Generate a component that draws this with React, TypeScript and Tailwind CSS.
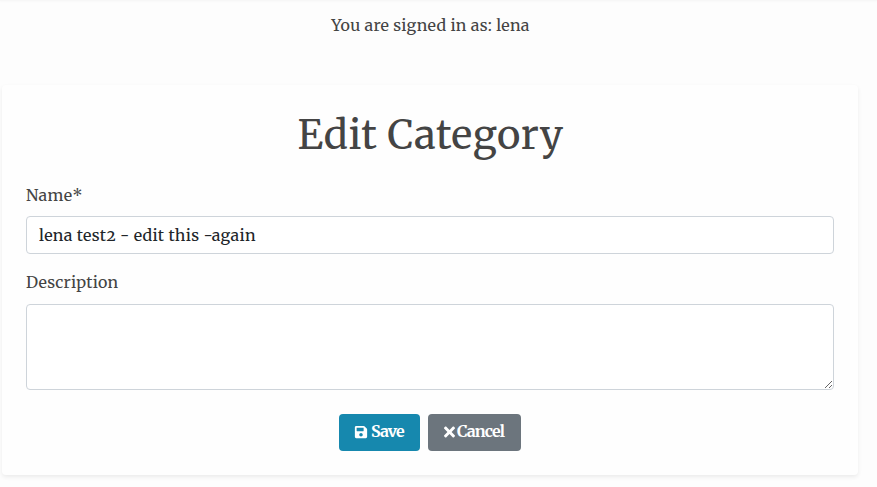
import { FaSave, FaTimes } from 'react-icons/fa';

export default function App() {
  return (
    <div className="min-h-[487px] overflow-hidden bg-[#fdfdfd] font-['Merriweather','DejaVu_Serif',serif] text-[16px] font-[385] leading-6 text-[#444] [font-feature-settings:'onum']">
      <div className="h-px bg-[#f7f7f7] shadow-[0_1px_2px_rgba(0,0,0,0.03)]" />
      <main className="ml-0.5 w-[856px]">
        <p className="pt-3 pl-px text-center tracking-[0.28px]">You are signed in as: lena</p>
        <form className="mt-12 h-[390px] rounded bg-[#fefefe] px-6 pt-6 shadow-[0_2px_4px_rgba(0,0,0,0.075)]" onSubmit={(e) => e.preventDefault()}>
          <h1 className="pt-0.5 pl-px text-center text-[40px] leading-12 font-normal tracking-[0.5px]">Edit Category</h1>
          <label htmlFor="name" className="mt-6 block tracking-[0.35px]">Name*</label>
          <input
            id="name"
            defaultValue="lena test2 - edit this -again"
            className="mt-[9px] block h-[38px] w-full rounded border border-[#ced4da] bg-white px-3 tracking-[0.29px] text-[#212529] outline-none"
          />
          <label htmlFor="description" className="mt-4 block tracking-[0.2px]">Description</label>
          <textarea
            id="description"
            className="mt-2.5 block h-[86px] w-full resize-y rounded border border-[#ced4da] bg-white px-3 py-1.5 outline-none"
          />
          <div className="mt-6 flex gap-2 pl-[313px] font-bold text-white">
            <button type="submit" className="flex h-[37px] w-[81px] items-center gap-[3px] rounded bg-[#1688ae] pb-px pl-[15px]">
              <FaSave className="size-3.5" />
              <span className="pb-0.5 tracking-[-0.95px]">Save</span>
            </button>
            <button type="button" className="flex h-[37px] w-[93px] items-center gap-0.5 rounded bg-[#6c757d] pb-px pl-4">
              <FaTimes className="h-4 w-[11px]" />
              <span className="pb-0.5 tracking-[-0.85px]">Cancel</span>
            </button>
          </div>
        </form>
      </main>
    </div>
  );
}
